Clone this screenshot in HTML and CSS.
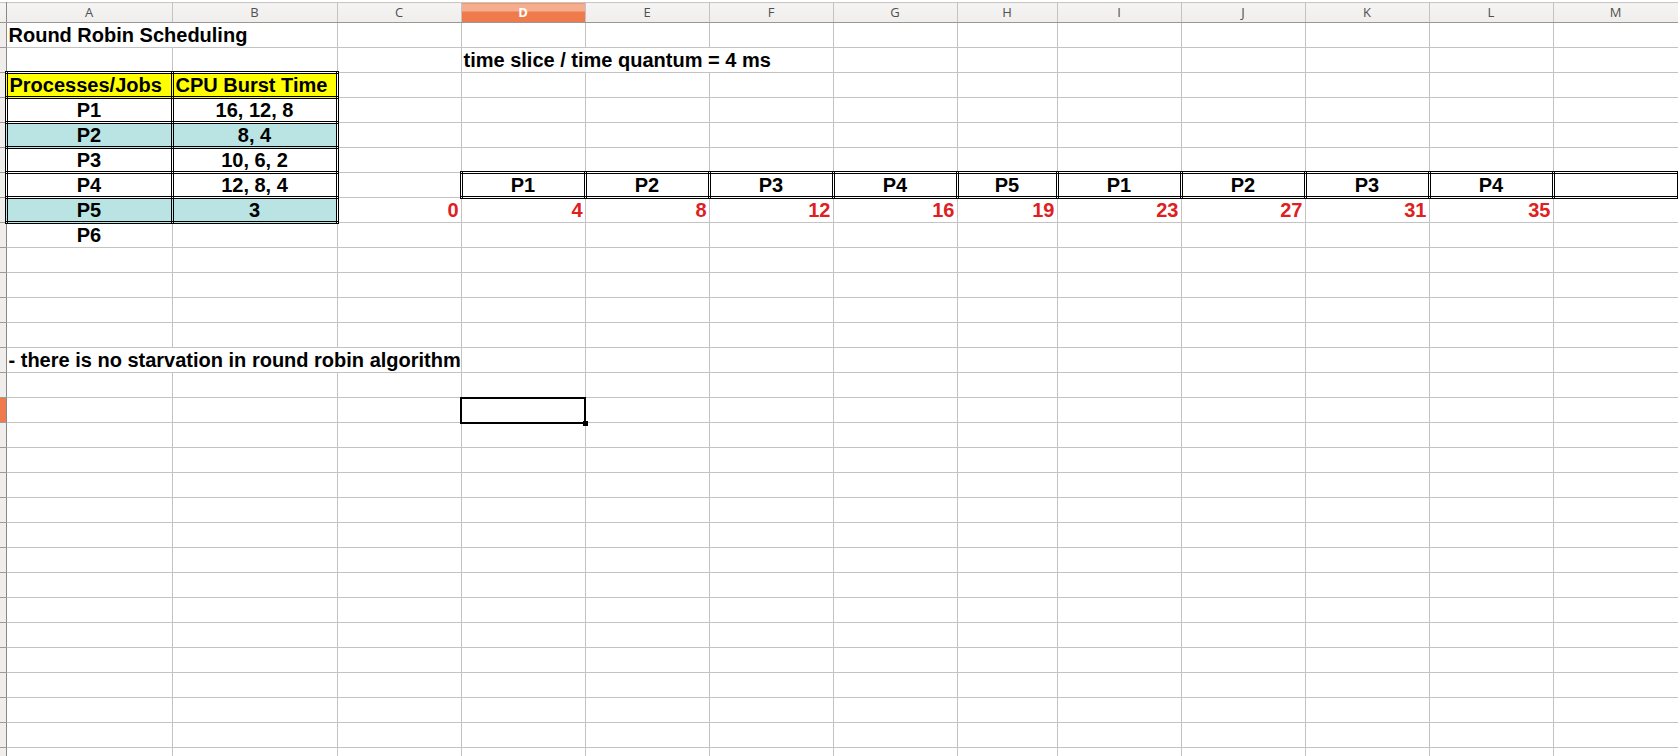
FILE: index.html
```html
<!DOCTYPE html>
<html>
<head>
<meta charset="utf-8">
<link rel="stylesheet" href="styles.css">
</head>
<body>
<div class="sheet">
<table class="grid">
<colgroup>
<col class="c-rh"><col class="c-a"><col class="c-b"><col class="c-n"><col class="c-n"><col class="c-n"><col class="c-n"><col class="c-n"><col class="c-h"><col class="c-n"><col class="c-n"><col class="c-n"><col class="c-n"><col class="c-m">
</colgroup>
<thead>
<tr class="hdr">
<th class="rh"></th><th>A</th><th>B</th><th>C</th><th class="sel">D</th><th>E</th><th>F</th><th>G</th><th>H</th><th>I</th><th>J</th><th>K</th><th>L</th><th>M</th>
</tr>
</thead>
<tbody>
<tr><td class="rh"></td><td colspan="2" class="txt">Round Robin Scheduling</td><td></td><td></td><td></td><td></td><td></td><td></td><td></td><td></td><td></td><td></td><td></td></tr>
<tr><td class="rh"></td><td></td><td></td><td></td><td colspan="3" class="txt">time slice / time quantum = 4 ms</td><td></td><td></td><td></td><td></td><td></td><td></td><td></td></tr>
<tr><td class="rh"></td><td class="dbl yel txt">Processes/Jobs</td><td class="dbl yel txt">CPU Burst Time</td><td></td><td></td><td></td><td></td><td></td><td></td><td></td><td></td><td></td><td></td><td></td></tr>
<tr><td class="rh"></td><td class="dbl ctr">P1</td><td class="dbl ctr">16, 12, 8</td><td></td><td></td><td></td><td></td><td></td><td></td><td></td><td></td><td></td><td></td><td></td></tr>
<tr><td class="rh"></td><td class="dbl ctr teal">P2</td><td class="dbl ctr teal">8, 4</td><td></td><td></td><td></td><td></td><td></td><td></td><td></td><td></td><td></td><td></td><td></td></tr>
<tr><td class="rh"></td><td class="dbl ctr">P3</td><td class="dbl ctr">10, 6, 2</td><td></td><td></td><td></td><td></td><td></td><td></td><td></td><td></td><td></td><td></td><td></td></tr>
<tr><td class="rh"></td><td class="dbl ctr">P4</td><td class="dbl ctr">12, 8, 4</td><td></td><td class="dbl ctr">P1</td><td class="dbl ctr">P2</td><td class="dbl ctr">P3</td><td class="dbl ctr">P4</td><td class="dbl ctr">P5</td><td class="dbl ctr">P1</td><td class="dbl ctr">P2</td><td class="dbl ctr">P3</td><td class="dbl ctr">P4</td><td class="dbl"></td></tr>
<tr><td class="rh"></td><td class="dbl ctr teal">P5</td><td class="dbl ctr teal">3</td><td class="num">0</td><td class="num">4</td><td class="num">8</td><td class="num">12</td><td class="num">16</td><td class="num">19</td><td class="num">23</td><td class="num">27</td><td class="num">31</td><td class="num">35</td><td></td></tr>
<tr><td class="rh"></td><td class="ctr">P6</td><td></td><td></td><td></td><td></td><td></td><td></td><td></td><td></td><td></td><td></td><td></td><td></td></tr>
<tr><td class="rh"></td><td></td><td></td><td></td><td></td><td></td><td></td><td></td><td></td><td></td><td></td><td></td><td></td><td></td></tr>
<tr><td class="rh"></td><td></td><td></td><td></td><td></td><td></td><td></td><td></td><td></td><td></td><td></td><td></td><td></td><td></td></tr>
<tr><td class="rh"></td><td></td><td></td><td></td><td></td><td></td><td></td><td></td><td></td><td></td><td></td><td></td><td></td><td></td></tr>
<tr><td class="rh"></td><td></td><td></td><td></td><td></td><td></td><td></td><td></td><td></td><td></td><td></td><td></td><td></td><td></td></tr>
<tr><td class="rh"></td><td colspan="3" class="txt">- there is no starvation in round robin algorithm</td><td></td><td></td><td></td><td></td><td></td><td></td><td></td><td></td><td></td><td></td></tr>
<tr><td class="rh"></td><td></td><td></td><td></td><td></td><td></td><td></td><td></td><td></td><td></td><td></td><td></td><td></td><td></td></tr>
<tr><td class="rh rsel"></td><td></td><td></td><td></td><td class="cur"><span class="handle"></span></td><td></td><td></td><td></td><td></td><td></td><td></td><td></td><td></td><td></td></tr>
<tr><td class="rh"></td><td></td><td></td><td></td><td></td><td></td><td></td><td></td><td></td><td></td><td></td><td></td><td></td><td></td></tr>
<tr><td class="rh"></td><td></td><td></td><td></td><td></td><td></td><td></td><td></td><td></td><td></td><td></td><td></td><td></td><td></td></tr>
<tr><td class="rh"></td><td></td><td></td><td></td><td></td><td></td><td></td><td></td><td></td><td></td><td></td><td></td><td></td><td></td></tr>
<tr><td class="rh"></td><td></td><td></td><td></td><td></td><td></td><td></td><td></td><td></td><td></td><td></td><td></td><td></td><td></td></tr>
<tr><td class="rh"></td><td></td><td></td><td></td><td></td><td></td><td></td><td></td><td></td><td></td><td></td><td></td><td></td><td></td></tr>
<tr><td class="rh"></td><td></td><td></td><td></td><td></td><td></td><td></td><td></td><td></td><td></td><td></td><td></td><td></td><td></td></tr>
<tr><td class="rh"></td><td></td><td></td><td></td><td></td><td></td><td></td><td></td><td></td><td></td><td></td><td></td><td></td><td></td></tr>
<tr><td class="rh"></td><td></td><td></td><td></td><td></td><td></td><td></td><td></td><td></td><td></td><td></td><td></td><td></td><td></td></tr>
<tr><td class="rh"></td><td></td><td></td><td></td><td></td><td></td><td></td><td></td><td></td><td></td><td></td><td></td><td></td><td></td></tr>
<tr><td class="rh"></td><td></td><td></td><td></td><td></td><td></td><td></td><td></td><td></td><td></td><td></td><td></td><td></td><td></td></tr>
<tr><td class="rh"></td><td></td><td></td><td></td><td></td><td></td><td></td><td></td><td></td><td></td><td></td><td></td><td></td><td></td></tr>
<tr><td class="rh"></td><td></td><td></td><td></td><td></td><td></td><td></td><td></td><td></td><td></td><td></td><td></td><td></td><td></td></tr>
<tr><td class="rh"></td><td></td><td></td><td></td><td></td><td></td><td></td><td></td><td></td><td></td><td></td><td></td><td></td><td></td></tr>
<tr><td class="rh"></td><td></td><td></td><td></td><td></td><td></td><td></td><td></td><td></td><td></td><td></td><td></td><td></td><td></td></tr>
</tbody>
</table>
</div>
</body>
</html>
```
FILE: styles.css
```css
html, body {
  margin: 0;
  padding: 0;
  background: #ffffff;
  overflow: hidden;
}
.sheet {
  width: 1678px;
  height: 756px;
  overflow: hidden;
  padding-top: 2px;
  box-sizing: border-box;
}
.grid {
  border-collapse: collapse;
  table-layout: fixed;
  width: 1678px;
  font-family: "Liberation Sans", Arial, sans-serif;
  font-weight: bold;
  font-size: 20px;
  color: #000;
}
.c-rh { width: 6px; }
.c-a { width: 166px; }
.c-b { width: 165px; }
.c-n { width: 124px; }
.c-h { width: 100px; }
.c-m { width: 125px; }

.grid tbody tr { height: 25px; }
.grid td {
  padding: 0 2px;
  border: 1px solid #c3c3c3;
  line-height: 19px;
  white-space: nowrap;
  overflow: visible;
  vertical-align: middle;
}
.hdr th {
  height: 19px;
  padding: 0;
  font-family: "Open Sans", "Noto Sans", sans-serif;
  font-weight: normal;
  font-size: 13px;
  color: #505050;
  background: linear-gradient(#f5f4f3, #efeeec);
  border-top: 1px solid #c8c8c8;
  border-left: 1px solid #c3c3c3;
  border-right: 1px solid #c3c3c3;
  border-bottom: 1px solid #9a9894;
  line-height: 19px;
  text-align: center;
}
.hdr th.sel {
  background: linear-gradient(#f6ad8d 0, #f6ad8d 42%, #ef7a4b 42%, #ef7a4b 100%);
  color: #fff;
  font-weight: bold;
}
.grid td.rh {
  padding: 0;
  background: #efeeec;
  border-left: none;
  border-right: 1px solid #8c8984;
  border-bottom: 1px solid #9e9b96;
}
.grid th.rh { border-left: none; border-right: 1px solid #8c8984; }
.grid td.rsel { background: #ef7a4b; }

.txt { text-align: left; }
.ctr { text-align: center; }
.num { text-align: right; color: #e0201e; }
.grid td.dbl { border: 3px double #000; }
.yel { background: #ffff00; }
.teal { background: #bae3e3; }
.grid td.cur {
  border: 2px solid #000;
  position: relative;
}
.handle {
  position: absolute;
  right: -4px;
  bottom: -4px;
  width: 5px;
  height: 5px;
  background: #000;
}
```
